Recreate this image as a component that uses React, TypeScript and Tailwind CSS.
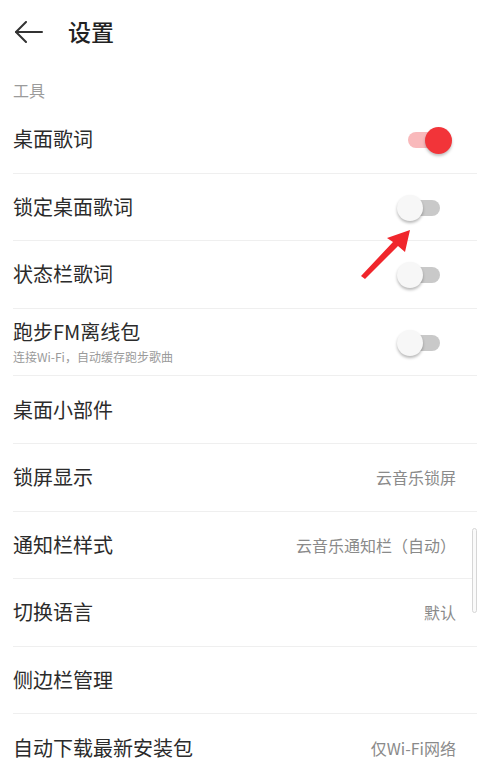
import React from "react";

const font = { fontFamily: '"Noto Sans CJK SC", "Noto Sans", sans-serif' };

function Toggle({ on }: { on: boolean }) {
  if (on) {
    return (
      <div className="relative w-[55px] h-[28px] flex items-center">
        <div className="absolute left-[11px] right-[7px] h-[16px] rounded-full bg-[#f9b9bb]" />
        <div className="absolute right-0 w-[27px] h-[27px] rounded-full bg-[#f23439] shadow-[0_2px_3px_rgba(0,0,0,0.25)]" />
      </div>
    );
  }
  return (
    <div className="relative w-[55px] h-[28px] flex items-center">
      <div className="absolute left-[8px] right-[12px] h-[16px] rounded-full bg-[#c9c9c9]" />
      <div className="absolute left-[0px] w-[26px] h-[26px] rounded-full bg-[#f7f7f7] shadow-[0_2px_3px_rgba(0,0,0,0.28)]" />
    </div>
  );
}

function Row({
  title,
  sub,
  value,
  toggle,
  last,
}: {
  title: string;
  sub?: string;
  value?: string;
  toggle?: "on" | "off";
  last?: boolean;
}) {
  return (
    <div
      className={
        "flex items-center h-[67.6px] " + (last ? "" : "border-b border-[#efefef]")
      }
    >
      <div className="flex-1 flex flex-col">
        <div className="text-[20px] leading-[26px] text-[#2b2b2b]">{title}</div>
        {sub && <div className="text-[12px] leading-[18px] text-[#9a9a9a] mt-[3px]">{sub}</div>}
      </div>
      {value && <div className="text-[16px] text-[#8a8a8a] pr-[21px]">{value}</div>}
      {toggle && (
        <div className="pr-[25px] pt-[2px]">
          <Toggle on={toggle === "on"} />
        </div>
      )}
    </div>
  );
}

export default function App() {
  return (
    <div className="relative w-[500px] h-[761px] bg-white overflow-hidden" style={font}>
      <div className="flex items-center h-[66px] pl-[15px] pb-[3px]">
        <svg width="28" height="22" viewBox="0 0 28 22" fill="none" stroke="#333" strokeWidth="2" strokeLinecap="round" strokeLinejoin="round">
          <path d="M1 11 H27" />
          <path d="M11 1 L1 11 L11 21" />
        </svg>
        <div className="ml-[25px] text-[23px] font-medium text-[#222]">设置</div>
      </div>
      <div className="pl-[13px] pr-[23px]">
        <div className="h-[40px] flex items-center text-[16px] text-[#9b9b9b] pt-[8px]">工具</div>
        <Row title="桌面歌词" toggle="on" />
        <Row title="锁定桌面歌词" toggle="off" />
        <Row title="状态栏歌词" toggle="off" />
        <Row title="跑步FM离线包" sub="连接Wi-Fi，自动缓存跑步歌曲" toggle="off" />
        <Row title="桌面小部件" />
        <Row title="锁屏显示" value="云音乐锁屏" />
        <Row title="通知栏样式" value="云音乐通知栏（自动）" />
        <Row title="切换语言" value="默认" />
        <Row title="侧边栏管理" />
        <Row title="自动下载最新安装包" value="仅Wi-Fi网络" last />
      </div>
      <svg className="absolute left-0 top-0 pointer-events-none" width="500" height="761">
        <polygon points="410,230 405,252 398,246 365,279 361,276 393,242 387,238" fill="#f0262c" />
      </svg>
      <div className="absolute left-[472px] top-[528px] w-[5px] h-[85px] rounded-full border border-[#d6d6d6] bg-[#fafafa]" />
    </div>
  );
}
